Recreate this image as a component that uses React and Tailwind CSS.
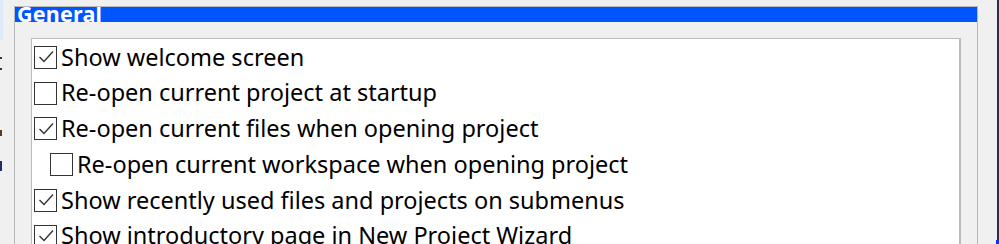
import React from "react";

function Box({ checked }) {
  return (
    <div className="w-[23px] h-[23px] border-[1.5px] border-[#333333] bg-white shrink-0 flex items-center justify-center">
      {checked && (
        <svg width="20" height="20" viewBox="0 0 20 20" fill="none">
          <path d="M3.5 10 L8 14.5 L17 4.5" stroke="#333333" strokeWidth="1.4" />
        </svg>
      )}
    </div>
  );
}

function Row({ checked, label, indent }) {
  return (
    <div className={`h-[35.75px] shrink-0 flex items-center ${indent ? "pl-[17px]" : "pl-[1px]"}`}>
      <Box checked={checked} />
      <span className="ml-[4px] text-[23.5px] leading-none text-black whitespace-nowrap">
        {label}
      </span>
    </div>
  );
}

export default function App() {
  const rows = [
    { checked: true, label: "Show welcome screen" },
    { checked: false, label: "Re-open current project at startup" },
    { checked: true, label: "Re-open current files when opening project" },
    { checked: false, label: "Re-open current workspace when opening project", indent: true },
    { checked: true, label: "Show recently used files and projects on submenus" },
    { checked: true, label: "Show introductory page in New Project Wizard" },
  ];
  return (
    <div className="w-[999px] h-[244px] overflow-hidden bg-[#f0f0f0] flex font-['Noto_Sans',sans-serif]">
      {/* left sliver */}
      <div className="w-[3px] shrink-0 flex flex-col">
        <div className="h-[40px] shrink-0 bg-[#dce9f8]" />
        <div className="h-[17px] shrink-0" />
        <div className="h-[2px] w-[2px] shrink-0 bg-[#333]" />
        <div className="h-[9px] shrink-0" />
        <div className="h-[2px] w-[2px] shrink-0 bg-[#333]" />
        <div className="h-[60px] shrink-0" />
        <div className="h-[6px] w-[2px] shrink-0 bg-[#5a3a20]" />
        <div className="h-[25px] shrink-0" />
        <div className="h-[10px] w-[2px] shrink-0 bg-[#1a3060]" />
      </div>
      <div className="w-[11px] shrink-0" />
      {/* group box */}
      <div className="mt-[6px] w-[964px] shrink-0 border-l border-r border-t border-[#b9b9b9] flex flex-col">
        <div className="h-[15px] shrink-0 bg-[#0055ff] overflow-hidden relative">
          <span className="absolute left-[2px] top-[-7px] text-white font-bold text-[21.5px] leading-[28px] tracking-[0.2px]">
            General
          </span>
        </div>
        <div className="shrink-0 pl-[16px] pr-[16px] pt-[16px]">
          <div className="bg-white border-[1.5px] border-r-2 border-[#bcbcbc] h-[260px] pt-[0.5px] pl-[1px] flex flex-col">
            {rows.map((r, i) => (
              <Row key={i} {...r} />
            ))}
          </div>
        </div>
      </div>
      <div className="w-[19px] shrink-0" />
      <div className="w-[2px] shrink-0 bg-[#1c3552] relative">
        <div className="absolute bottom-0 left-[-1px] w-[3px] h-[4px] bg-[#0033ff]" />
      </div>
    </div>
  );
}
